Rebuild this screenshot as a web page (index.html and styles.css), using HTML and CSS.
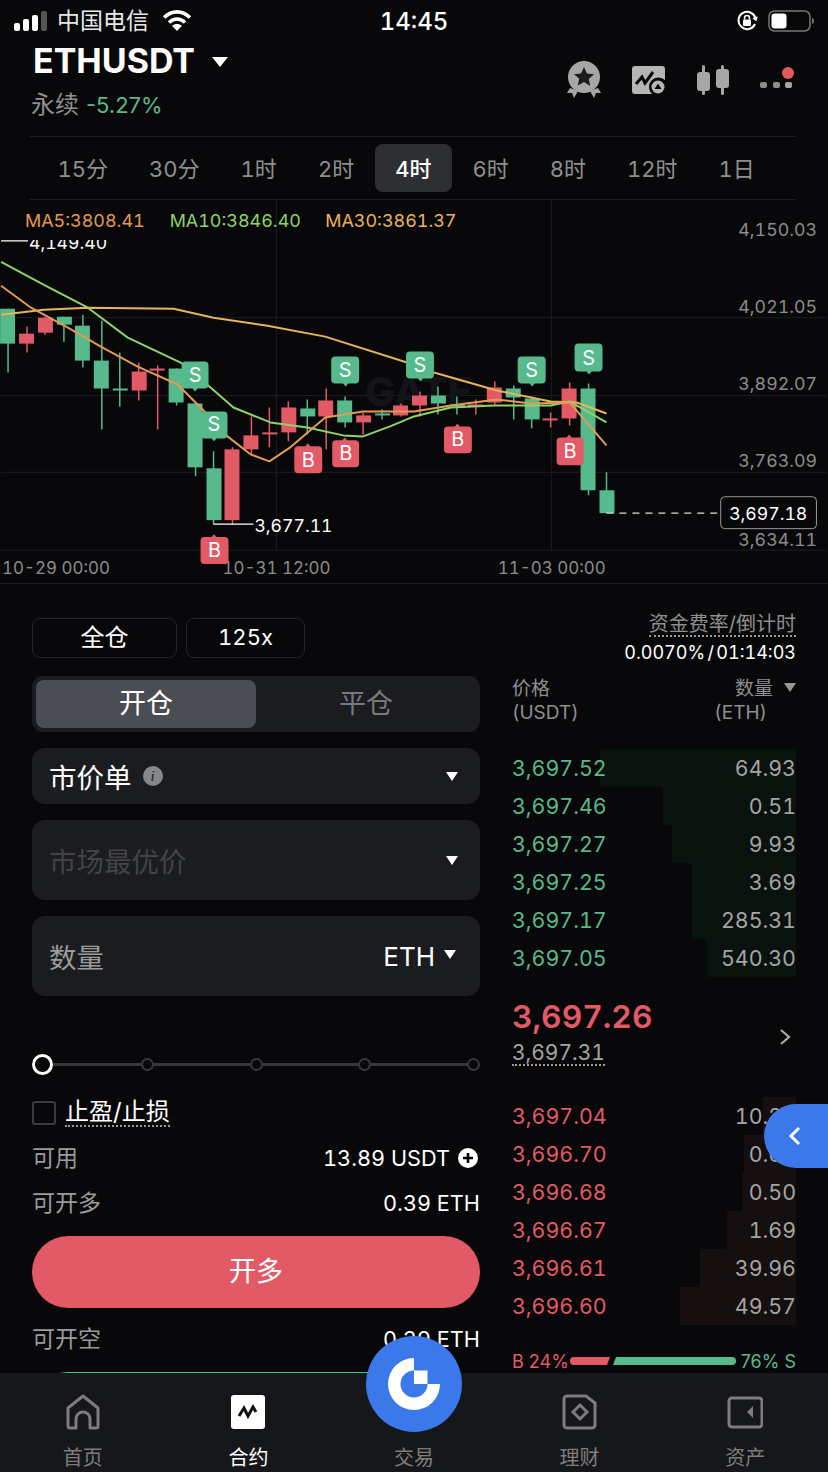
FILE: index.html
```html
<!DOCTYPE html>
<html lang="zh-CN">
<head>
    <meta charset="utf-8">
    <title>ETHUSDT 永续</title>
    <link rel="stylesheet" href="styles.css">
</head>
<body>
<div class="phone">

    <div class="status">
        <div class="status-left">
            <svg width="34" height="22" viewBox="0 0 34 22">
                <rect x="0" y="13" width="6" height="8" rx="2" fill="#fff"/>
                <rect x="9" y="9" width="6" height="12" rx="2" fill="#fff"/>
                <rect x="18" y="5" width="6" height="16" rx="2" fill="#fff"/>
                <rect x="27" y="1" width="6" height="20" rx="2" fill="#555"/>
            </svg>
            <span class="carrier">中国电信</span>
            <svg width="30" height="24" viewBox="0 0 30 24" fill="none" stroke="#fff" stroke-width="3.6">
                <path d="M2 8.5C10 1 20 1 28 8.5"/>
                <path d="M7 13.5C12 9 18 9 23 13.5"/>
                <path d="M15 22l-5-5.2c3-2.4 7-2.4 10 0z" fill="#fff" stroke="none"/>
            </svg>
        </div>
        <div class="clock">14:45</div>
        <div class="status-right">
            <svg width="22" height="22" viewBox="0 0 22 22" fill="none" stroke="#fff" stroke-width="2">
                <path d="M19 14a8.6 8.6 0 1 1 .6-5"/>
                <path d="M17 8l3 2 1-3.400" stroke-width="1.500"/>
                <rect x="7" y="9.500" width="8" height="6.500" rx="1" fill="#fff" stroke="none"/>
                <path d="M8.500 9.500V8a2.500 2.500 0 0 1 5 0v1.500" stroke-width="1.500"/>
            </svg>
            <svg width="46" height="22" viewBox="0 0 46 22">
                <rect x="1" y="1" width="41" height="20" rx="5.500" fill="none" stroke="#777" stroke-width="1.500"/>
                <rect x="3.500" y="3.500" width="15" height="15" rx="3" fill="#fff"/>
                <path d="M44 8c1.500.5 2 1.500 2 3s-.5 2.500-2 3z" fill="#777"/>
            </svg>
        </div>
    </div>

    <div class="header">
        <div>
            <div class="symbol">ETHUSDT<span class="caret caret-big"></span></div>
            <div class="symbol-sub"><span class="perp">永续</span> <span class="change">-5.27%</span></div>
        </div>
        <div class="header-icons">
            <svg width="34" height="38" viewBox="0 0 34 38">
                <path d="M3 27l-3 5 5 0 2 5 4-7zM31 27l3 5-5 0-2 5-4-7z" fill="#a6a6a6"/>
                <circle cx="17" cy="16" r="16" fill="#a6a6a6"/>
                <path d="M17 6l3 6.500 7 .8-5.200 4.800 1.400 7L17 21l-6.200 3.600 1.400-7L7 13.300l7-.8z" fill="#1a1a1c"/>
            </svg>
            <svg width="33" height="28" viewBox="0 0 33 28">
                <path d="M3 0h27a3 3 0 0 1 3 3v11a9 9 0 0 0-13 14H3a3 3 0 0 1-3-3V3a3 3 0 0 1 3-3z" fill="#b5b5b5"/>
                <path d="M4 18l6-7 3 6 8-11" fill="none" stroke="#0a0a0c" stroke-width="3"/>
                <circle cx="26" cy="21" r="6.500" fill="#b5b5b5"/>
                <path d="M26 17.500l3.500 5.500h-7z" fill="#0a0a0c"/>
            </svg>
            <svg width="32" height="30" viewBox="0 0 32 30" fill="#a6a6a6">
                <rect x="0" y="7" width="13" height="19" rx="3"/>
                <rect x="5" y="0" width="3" height="30" rx="1.500"/>
                <rect x="19" y="4" width="13" height="19" rx="3"/>
                <rect x="24" y="0" width="3" height="30" rx="1.500"/>
            </svg>
            <svg width="36" height="26" viewBox="0 0 36 26">
                <rect x="0" y="15" width="7" height="6" rx="2" fill="#8d8d8d"/>
                <rect x="13" y="15" width="7" height="6" rx="2" fill="#8d8d8d"/>
                <rect x="25" y="15" width="7" height="6" rx="2" fill="#a6a6a6"/>
                <circle cx="28" cy="6" r="6" fill="#e25a5a"/>
            </svg>
        </div>
    </div>

    <div class="tabs">
        <span class="tab">15分</span>
        <span class="tab">30分</span>
        <span class="tab">1时</span>
        <span class="tab">2时</span>
        <span class="tab tab-active">4时</span>
        <span class="tab">6时</span>
        <span class="tab">8时</span>
        <span class="tab">12时</span>
        <span class="tab">1日</span>
    </div>

    <svg class="chart" width="828" height="384" viewBox="0 200 828 384">
        <defs>
            <clipPath id="topClip"><rect x="0" y="240" width="200" height="20"/></clipPath>
        </defs>

        <path class="grid" d="M0 318H828M0 396H828M0 473H828M0 551H828M276 200V551M552 200V551"/>
        <text class="watermark" x="365" y="407">GATE</text>

        <text class="ma ma5" x="24" y="227">MA5:3808.41</text>
        <text class="ma ma10" x="169" y="227">MA10:3846.40</text>
        <text class="ma ma30" x="325" y="227">MA30:3861.37</text>

        <g class="axis-y">
            <text x="818" y="236">4,150.03</text>
            <text x="818" y="313">4,021.05</text>
            <text x="818" y="391">3,892.07</text>
            <text x="818" y="468">3,763.09</text>
            <text x="818" y="547">3,634.11</text>
        </g>
        <g class="axis-x">
            <text x="1" y="575">10-29 00:00</text>
            <text x="222" y="575">10-31 12:00</text>
            <text x="498" y="575">11-03 00:00</text>
        </g>

        <!-- wicks -->
        <path class="wick-g" d="M7 309V373M63 317V342M82 315V368M101 321V430M119 353V407M176 369V406M195 404V477M213 452V525M307 400V435M345 397V428M382 410V420M438 387V415M457 397V415M514 386V420M532 397V429M589 384V496M607 473V514"/>
        <path class="wick-r" d="M26 327V353M44 317V335M138 363V401M157 366V430M232 448V525M251 417V455M269 408V448M288 402V442M326 389V450M363 413V435M401 404V417M420 392V417M476 400V415M495 382V405M551 413V428M570 383V426"/>
        <!-- bodies -->
        <g class="body-g">
            <rect x="-1" y="309" width="15" height="35"/>
            <rect x="56" y="317" width="15" height="8"/>
            <rect x="74" y="326" width="15" height="35"/>
            <rect x="93" y="361" width="15" height="28"/>
            <rect x="112" y="389" width="15" height="2"/>
            <rect x="168" y="369" width="15" height="34"/>
            <rect x="187" y="404" width="15" height="64"/>
            <rect x="206" y="469" width="15" height="52"/>
            <rect x="300" y="409" width="15" height="8"/>
            <rect x="337" y="401" width="15" height="22"/>
            <rect x="375" y="414" width="15" height="2"/>
            <rect x="431" y="396" width="15" height="8"/>
            <rect x="450" y="405" width="15" height="2"/>
            <rect x="506" y="389" width="15" height="9"/>
            <rect x="525" y="399" width="15" height="21"/>
            <rect x="581" y="389" width="15" height="102"/>
            <rect x="600" y="491" width="15" height="23"/>
        </g>
        <g class="body-r">
            <rect x="18" y="334" width="15" height="10"/>
            <rect x="37" y="318" width="15" height="15"/>
            <rect x="131" y="372" width="15" height="19"/>
            <rect x="149" y="369" width="15" height="2"/>
            <rect x="224" y="450" width="15" height="71"/>
            <rect x="243" y="436" width="15" height="14"/>
            <rect x="262" y="433" width="15" height="2"/>
            <rect x="281" y="408" width="15" height="25"/>
            <rect x="318" y="401" width="15" height="16"/>
            <rect x="356" y="416" width="15" height="7"/>
            <rect x="393" y="406" width="15" height="10"/>
            <rect x="412" y="396" width="15" height="10"/>
            <rect x="468" y="405" width="15" height="2"/>
            <rect x="487" y="388" width="15" height="15"/>
            <rect x="543" y="419" width="15" height="2"/>
            <rect x="562" y="389" width="15" height="30"/>
        </g>

        <!-- moving averages -->
        <polyline class="line ma30-line" points="0,315 43,310 87,308 173,309 213,318 267,326 325,337 407,363 434,373 497,391 551,402 577,403 607,414"/>
        <polyline class="line ma10-line" points="0,262 43,285 87,308 127,338 180,363 210,388 233,408 270,423 307,428 343,436 363,437 390,427 414,417 451,408 494,406 551,406 570,402 607,423"/>
        <polyline class="line ma5-line" points="0,286 30,308 67,328 100,347 137,367 177,385 202,410 227,437 250,455 269,462 290,448 325,418 363,412 414,412 451,406 497,400 531,404 570,403 607,446"/>

        <!-- high / low / last price -->
        <path class="mark" d="M0 241H27M213 525H253"/>
        <text class="mark-text" x="28" y="249" clip-path="url(#topClip)">4,149.40</text>
        <text class="mark-text" x="254" y="533">3,677.11</text>
        <path class="last-dash" d="M607 514H720"/>
        <rect class="last-box" x="721.500" y="497.500" width="96" height="32" rx="4"/>
        <text class="mark-text" x="730" y="521">3,697.18</text>

        <!-- trade markers -->
        <g class="badge-s">
            <path d="M185 362h19a4 4 0 0 1 4 4v19a4 4 0 0 1-4 4h-7l-2.500 3-2.500-3h-7a4 4 0 0 1-4-4v-19a4 4 0 0 1 4-4z"/>
            <path d="M204 412h19a4 4 0 0 1 4 4v19a4 4 0 0 1-4 4h-7l-2.500 3-2.500-3h-7a4 4 0 0 1-4-4v-19a4 4 0 0 1 4-4z"/>
            <path d="M335 357h20a4 4 0 0 1 4 4v19a4 4 0 0 1-4 4h-7l-2.500 3-2.500-3h-8a4 4 0 0 1-4-4v-19a4 4 0 0 1 4-4z"/>
            <path d="M410 352h20a4 4 0 0 1 4 4v19a4 4 0 0 1-4 4h-7l-2.500 3-2.500-3h-8a4 4 0 0 1-4-4v-19a4 4 0 0 1 4-4z"/>
            <path d="M522 357h20a4 4 0 0 1 4 4v19a4 4 0 0 1-4 4h-7l-2.500 3-2.500-3h-8a4 4 0 0 1-4-4v-19a4 4 0 0 1 4-4z"/>
            <path d="M579 344h20a4 4 0 0 1 4 4v20a4 4 0 0 1-4 4h-7l-2.500 3-2.500-3h-8a4 4 0 0 1-4-4v-20a4 4 0 0 1 4-4z"/>
        </g>
        <g class="badge-b">
            <path d="M204 538h7l2.500-3 2.500 3h8a4 4 0 0 1 4 4v19a4 4 0 0 1-4 4h-20a4 4 0 0 1-4-4v-19a4 4 0 0 1 4-4z"/>
            <path d="M298 447h7l2.500-3 2.500 3h8a4 4 0 0 1 4 4v19a4 4 0 0 1-4 4h-20a4 4 0 0 1-4-4v-19a4 4 0 0 1 4-4z"/>
            <path d="M336 441h6l2.500-3 2.500 3h8a4 4 0 0 1 4 4v19a4 4 0 0 1-4 4h-19a4 4 0 0 1-4-4v-19a4 4 0 0 1 4-4z"/>
            <path d="M448 427h7l2.500-3 2.500 3h8a4 4 0 0 1 4 4v19a4 4 0 0 1-4 4h-20a4 4 0 0 1-4-4v-19a4 4 0 0 1 4-4z"/>
            <path d="M561 438h6l2.500-3 2.500 3h8a4 4 0 0 1 4 4v20a4 4 0 0 1-4 4h-19a4 4 0 0 1-4-4v-20a4 4 0 0 1 4-4z"/>
        </g>
        <g class="badge-text">
            <text x="194.500" y="382">S</text>
            <text x="213.500" y="432">S</text>
            <text x="345" y="377">S</text>
            <text x="420" y="372">S</text>
            <text x="532" y="377">S</text>
            <text x="589" y="365">S</text>
            <text x="214" y="558">B</text>
            <text x="308" y="468">B</text>
            <text x="345.500" y="461">B</text>
            <text x="458" y="447">B</text>
            <text x="570.500" y="459">B</text>
        </g>
    </svg>

    <div class="trade">
        <div class="form">
            <div class="leverage">
                <div class="lev-btn lev-margin">全仓</div>
                <div class="lev-btn lev-rate">125x</div>
            </div>

            <div class="segment">
                <div class="seg seg-active">开仓</div>
                <div class="seg">平仓</div>
            </div>

            <div class="field field-short">
                <div class="field-label">市价单 <span class="info">i</span></div>
                <span class="caret"></span>
            </div>
            <div class="field field-tall">
                <div class="field-label field-disabled">市场最优价</div>
                <span class="caret"></span>
            </div>
            <div class="field field-tall field-last">
                <div class="field-label field-muted">数量</div>
                <div class="unit">ETH <span class="caret"></span></div>
            </div>

            <div class="slider">
                <span class="knob"></span>
                <span class="track track-first"></span><span class="stop"></span>
                <span class="track"></span><span class="stop"></span>
                <span class="track"></span><span class="stop"></span>
                <span class="track"></span><span class="stop"></span>
            </div>

            <div class="tpsl">
                <span class="checkbox"></span>
                <span class="tpsl-text">止盈/止损</span>
            </div>

            <div class="info-row info-first">
                <span class="info-key">可用</span>
                <span class="info-val">13.89 USDT
                    <svg width="20" height="20" viewBox="0 0 20 20"><circle cx="10" cy="10" r="10" fill="#fff"/><path d="M10 5v10M5 10h10" stroke="#08080a" stroke-width="2.600"/></svg>
                </span>
            </div>
            <div class="info-row">
                <span class="info-key">可开多</span>
                <span class="info-val">0.39 ETH</span>
            </div>
            <div class="btn btn-long">开多</div>
            <div class="info-row info-short">
                <span class="info-key">可开空</span>
                <span class="info-val">0.39 ETH</span>
            </div>
            <div class="btn btn-short">开空</div>
        </div>

        <div class="book">
            <div class="funding">
                <div><span class="dotted funding-title">资金费率/倒计时</span></div>
                <div class="funding-val">0.0070% / 01:14:03</div>
            </div>

            <div class="book-head">
                <div>价格<br>(USDT)</div>
                <div class="book-head-right">
                    <div>数量<span class="caret caret-grey"></span></div>
                    <div class="head-unit">(ETH)</div>
                </div>
            </div>

            <div class="rows rows-green">
                <div class="row" style="background-size:196px 100%"><span>3,697.52</span><span>64.93</span></div>
                <div class="row" style="background-size:133px 100%"><span>3,697.46</span><span>0.51</span></div>
                <div class="row" style="background-size:124px 100%"><span>3,697.27</span><span>9.93</span></div>
                <div class="row" style="background-size:104px 100%"><span>3,697.25</span><span>3.69</span></div>
                <div class="row" style="background-size:104px 100%"><span>3,697.17</span><span>285.31</span></div>
                <div class="row" style="background-size:89px 100%"><span>3,697.05</span><span>540.30</span></div>
            </div>

            <div class="mid">
                <div class="mid-prices">
                    <div class="mid-price">3,697.26</div>
                    <div class="mid-mark"><span class="dotted">3,697.31</span></div>
                </div>
                <svg width="12" height="18" viewBox="0 0 12 18" fill="none" stroke="#aaa" stroke-width="2.200"><path d="M2 2l8 7-8 7"/></svg>
            </div>

            <div class="rows rows-red">
                <div class="row" style="background-size:33px 100%"><span>3,697.04</span><span>10.23</span></div>
                <div class="row" style="background-size:52px 100%"><span>3,696.70</span><span>0.65</span></div>
                <div class="row" style="background-size:54px 100%"><span>3,696.68</span><span>0.50</span></div>
                <div class="row" style="background-size:69px 100%"><span>3,696.67</span><span>1.69</span></div>
                <div class="row" style="background-size:96px 100%"><span>3,696.61</span><span>39.96</span></div>
                <div class="row" style="background-size:116px 100%"><span>3,696.60</span><span>49.57</span></div>
            </div>

            <div class="ratio">
                <span class="ratio-b">B 24%</span>
                <svg width="170" height="8" viewBox="0 0 170 8">
                    <path d="M4 0H40L37 8H4a4 4 0 0 1 0-8z" fill="#e25a66"/>
                    <path d="M46 0H162a4 4 0 0 1 0 8H43z" fill="#57ba8c"/>
                </svg>
                <span class="ratio-s">76% S</span>
            </div>
        </div>
    </div>

    <div class="side-tab">
        <svg width="14" height="20" viewBox="0 0 14 20" fill="none" stroke="#fff" stroke-width="3"><path d="M12 2L4 10l8 8"/></svg>
    </div>

    <div class="nav">
        <div class="nav-item">
            <svg width="36" height="36" viewBox="0 0 36 36" fill="none" stroke="#7d7d7d" stroke-width="3" stroke-linejoin="round">
                <path d="M3 14L18 2l15 12v18a2 2 0 0 1-2 2h-6v-9a7 7 0 0 0-14 0v9H5a2 2 0 0 1-2-2z"/>
            </svg>
            <span>首页</span>
        </div>
        <div class="nav-item nav-active">
            <svg width="36" height="36" viewBox="0 0 36 36">
                <rect x="1" y="1" width="34" height="34" rx="3" fill="#fff"/>
                <path d="M9 22l5-8 4 8 5-9 3 5" fill="none" stroke="#111" stroke-width="3"/>
            </svg>
            <span>合约</span>
        </div>
        <div class="nav-item">
            <span class="nav-gap"></span>
            <span>交易</span>
        </div>
        <div class="nav-item">
            <svg width="36" height="36" viewBox="0 0 36 36" fill="none" stroke="#7d7d7d" stroke-width="3">
                <path d="M5 2h19l9 7v22a3 3 0 0 1-3 3H5a3 3 0 0 1-3-3V5a3 3 0 0 1 3-3z"/>
                <path d="M18 11l7 7-7 7-7-7z"/>
            </svg>
            <span>理财</span>
        </div>
        <div class="nav-item">
            <svg width="36" height="36" viewBox="0 0 36 36" fill="none" stroke="#7d7d7d" stroke-width="3">
                <rect x="2" y="4" width="33" height="29" rx="3"/>
                <path d="M26 12l-6 6 6 6z" fill="#7d7d7d" stroke="none"/>
            </svg>
            <span>资产</span>
        </div>
    </div>

    <div class="fab">
        <svg width="52" height="52" viewBox="0 0 52 52">
            <path d="M26 0A26 26 0 1 0 52 26H39.500A13.500 13.500 0 1 1 26 12.500z" fill="#fff"/>
            <rect x="26" y="12.500" width="13.500" height="13.500" fill="#fff"/>
        </svg>
    </div>

</div>
</body>
</html>
```

FILE: styles.css
```css
* {
    box-sizing: border-box;
}
body {
    margin: 0;
    background: #08080a;
}
.phone {
    position: relative;
    width: 828px;
    height: 1472px;
    overflow: hidden;
    background: #08080a;
    color: #fff;
    font-family: Inter, "Noto Sans CJK SC", sans-serif;
    font-variant-numeric: tabular-nums;
}
svg {
    display: block;
}

/* status bar */
.status {
    display: flex;
    justify-content: space-between;
    align-items: center;
    height: 42px;
    padding: 0 14px;
}
.status-left,
.status-right {
    display: flex;
    align-items: center;
    width: 200px;
}
.status-right {
    justify-content: flex-end;
    gap: 10px;
}
.carrier {
    margin: 0 13px 0 9px;
    font-size: 23px;
    line-height: 26px;
    color: #e8e8e8;
}
.clock {
    font-size: 24px;
    font-weight: 500;
}

/* header */
.header {
    display: flex;
    justify-content: space-between;
    height: 95px;
    margin: 0 32px 0 30px;
    border-bottom: 1px solid #1c1e21;
}
.symbol {
    padding-left: 3px;
    margin-top: -1px;
    font-size: 34px;
    line-height: 40px;
    font-weight: 700;
}
.symbol .caret {
    margin-left: 17px;
    vertical-align: 6px;
}
.symbol-sub {
    margin-top: 9px;
    padding-left: 1px;
    line-height: 30px;
    font-size: 22px;
}
.perp {
    color: #8f8f8f;
    font-size: 24px;
}
.change {
    color: #57ba8c;
    margin-left: 1px;
    font-variant-numeric: normal;
}
.header-icons {
    display: flex;
    align-items: center;
    gap: 31.5px;
    height: 76px;
}
.caret {
    display: inline-block;
    width: 0;
    height: 0;
    border-left: 6px solid transparent;
    border-right: 6px solid transparent;
    border-top: 9px solid #fff;
}
.caret-big {
    border-left-width: 8px;
    border-right-width: 8px;
    border-top-width: 10px;
}
.caret-grey {
    margin-left: 11px;
    border-top-color: #999;
    vertical-align: 3px;
}

/* interval tabs */
.tabs {
    display: flex;
    height: 63px;
    margin: 0 32px 0 30px;
    padding: 7px 0 0 7px;
    border-bottom: 1px solid #1c1e21;
}
.tab {
    height: 48px;
    padding: 0 20.5px;
    font-size: 22px;
    line-height: 50px;
    color: #8f8f8f;
    white-space: nowrap;
}
.tab-active {
    background: #2d2f33;
    border-radius: 8px;
    color: #fff;
    font-weight: 500;
}

/* chart */
.chart {
    border-bottom: 1px solid #1c1e21;
    font-family: Inter, sans-serif;
}
.grid {
    stroke: #1c1e21;
    stroke-width: 1;
    fill: none;
}
.watermark {
    font-size: 40px;
    font-weight: 800;
    fill: #131417;
}
.ma {
    font-size: 18px;
}
.ma5 { fill: #e39a55; }
.ma10 { fill: #8ed36a; }
.ma30 { fill: #e8b45a; }
.axis-y text {
    text-anchor: end;
    font-size: 17.8px;
    fill: #8c8c8c;
}
.axis-x text {
    font-size: 17px;
    fill: #8c8c8c;
}
.wick-g,
.wick-r {
    fill: none;
    stroke-width: 1.5;
}
.wick-g { stroke: #57ba8c; }
.wick-r { stroke: #e25a66; }
.body-g { fill: #57ba8c; }
.body-r { fill: #e25a66; }
.line {
    fill: none;
    stroke-width: 2;
    stroke-linejoin: round;
}
.ma5-line { stroke: #e39a55; }
.ma10-line { stroke: #8ed36a; }
.ma30-line { stroke: #e8b45a; }
.mark {
    stroke: #fff;
    stroke-width: 1.3;
    fill: none;
}
.mark-text {
    font-size: 17.7px;
    fill: #fff;
}
.last-dash {
    stroke: #ddd;
    stroke-width: 1.3;
    stroke-dasharray: 7 6;
}
.last-box {
    fill: #08080a;
    stroke: #999;
    stroke-width: 1;
}
.badge-s { fill: #57ba8c; }
.badge-b { fill: #e25a66; }
.badge-text text {
    font-size: 20px;
    fill: #fff;
    text-anchor: middle;
}

/* trade area */
.trade {
    display: flex;
    gap: 32px;
    padding: 28px 32px 0;
}
.form {
    flex: none;
    width: 448px;
    padding-top: 6px;
}
.leverage {
    display: flex;
    gap: 9px;
}
.lev-btn {
    height: 40px;
    border: 1.5px solid #232529;
    border-radius: 8px;
    text-align: center;
    font-size: 22px;
    line-height: 37px;
}
.lev-margin {
    width: 145px;
    font-size: 24px;
}
.lev-rate { width: 119px; }

.segment {
    display: flex;
    height: 56px;
    margin-top: 18px;
    padding: 4px;
    background: #1a1c20;
    border-radius: 11px;
}
.seg {
    width: 220px;
    font-size: 27px;
    line-height: 48px;
    text-align: center;
    color: #77797e;
}
.seg-active {
    background: #4a4d53;
    border-radius: 8px;
    color: #fff;
}
.field {
    display: flex;
    justify-content: space-between;
    align-items: center;
    margin-top: 16px;
    padding: 0 22px 0 17px;
    background: #1a1c20;
    border-radius: 13px;
}
.field-short { height: 56px; }
.field-tall { height: 80px; }
.field-label {
    display: flex;
    align-items: center;
    gap: 11px;
    font-size: 27.5px;
}
.field-disabled { color: #414347; }
.field-muted { color: #9b9b9b; }
.info {
    width: 20px;
    height: 20px;
    border-radius: 50%;
    background: #85878b;
    color: #1a1c20;
    font-family: "Liberation Serif", serif;
    font-style: italic;
    font-size: 15px;
    line-height: 20px;
    text-align: center;
}
.unit {
    display: flex;
    align-items: center;
    gap: 9px;
    margin-right: 2px;
    font-size: 26px;
}
.unit .caret {
    margin-top: -4px;
}

.slider {
    display: flex;
    align-items: center;
    height: 24px;
    margin-top: 56px;
}
.knob {
    flex: none;
    width: 21px;
    height: 21px;
    border: 3.5px solid #fff;
    border-radius: 50%;
}
.track {
    flex: 1;
    height: 3px;
    background: #36383c;
}
.track-first {
    flex: 0 0 88px;
}
.stop {
    flex: none;
    width: 13px;
    height: 13px;
    border: 2.5px solid #36383c;
    border-radius: 50%;
}

.tpsl {
    display: flex;
    align-items: center;
    gap: 9px;
    height: 24px;
    margin-top: 25px;
}
.checkbox {
    width: 24px;
    height: 24px;
    border: 2px solid #3a3c40;
    border-radius: 3px;
}
.tpsl-text {
    font-size: 24px;
    line-height: 26px;
    border-bottom: 2px dotted #999;
}
.info-row {
    display: flex;
    justify-content: space-between;
    align-items: center;
    height: 34px;
    margin-top: 11px;
}
.info-first { margin-top: 16px; }
.info-short { margin-top: 14px; }
.info-key {
    margin-top: -4px;
    font-size: 23px;
    color: #9b9b9b;
}
.info-val {
    display: flex;
    align-items: center;
    gap: 8px;
    font-size: 21.7px;
}
.info-val svg {
    margin-right: 2px;
}
.btn {
    height: 72px;
    border-radius: 36px;
    text-align: center;
    font-size: 27px;
    line-height: 72px;
}
.btn-long {
    margin-top: 16px;
    background: #e25a66;
}
.btn-short {
    margin-top: 16px;
    background: #57ba8c;
}

/* order book */
.book {
    flex: none;
    width: 284px;
}
.funding {
    text-align: right;
    line-height: 27px;
}
.funding-title {
    font-size: 20px;
    color: #8f8f8f;
}
.dotted {
    display: inline-block;
    line-height: 1.05;
    border-bottom: 2px dotted #999;
}
.funding-val {
    font-size: 18px;
    word-spacing: -2.5px;
}
.book-head {
    display: flex;
    justify-content: space-between;
    margin-top: 11px;
    font-size: 19px;
    line-height: 24px;
    color: #8f8f8f;
}
.book-head-right {
    text-align: right;
}
.head-unit {
    margin-right: 29px;
}
.rows {
    margin-top: 24px;
}
.row {
    display: flex;
    justify-content: space-between;
    height: 38px;
    font-size: 21.4px;
    line-height: 38px;
    color: #a4a4a4;
    background-repeat: no-repeat;
    background-position: right;
}
.rows-green .row {
    background-image: linear-gradient(#0a120e, #0a120e);
}
.rows-red .row {
    background-image: linear-gradient(#150f0f, #150f0f);
}
.rows-green .row span:first-child { color: #57ba8c; }
.rows-red .row span:first-child { color: #e25a66; }
.rows-red {
    margin-top: 0;
}
.mid {
    display: flex;
    justify-content: space-between;
    align-items: center;
    height: 120px;
    padding: 0 5px 0 0;
}
.mid-prices {
    margin-top: -10px;
}
.mid-price {
    font-size: 31.8px;
    line-height: 40px;
    font-weight: 600;
    color: #e25a66;
}
.mid-mark {
    margin-top: 1px;
    font-size: 21px;
    line-height: 30px;
    color: #a4a4a4;
}
.ratio {
    display: flex;
    justify-content: space-between;
    align-items: center;
    height: 24px;
    margin-top: 24px;
    font-size: 18px;
    font-variant-numeric: normal;
    white-space: nowrap;
}
.ratio-b { color: #e25a66; }
.ratio-s { color: #57ba8c; }

/* floating bits */
.side-tab {
    position: absolute;
    right: 0;
    top: 1104px;
    display: flex;
    align-items: center;
    padding-left: 23px;
    width: 64px;
    height: 64px;
    background: #3b78ea;
    border-radius: 32px 0 0 32px;
}
.nav {
    position: absolute;
    left: 0;
    right: 0;
    bottom: 0;
    display: flex;
    justify-content: space-between;
    height: 99px;
    padding: 21px 0 0;
    background: #15171a;
}
.nav-item {
    display: flex;
    flex-direction: column;
    align-items: center;
    gap: 14px;
    width: 166px;
    font-size: 20px;
    line-height: 28px;
    color: #7d7d7d;
}
.nav-active {
    color: #fff;
}
.nav-gap {
    height: 36px;
}
.fab {
    position: absolute;
    left: 366px;
    top: 1336px;
    display: flex;
    align-items: center;
    justify-content: center;
    width: 96px;
    height: 96px;
    background: #3b78ea;
    border-radius: 50%;
}
```
